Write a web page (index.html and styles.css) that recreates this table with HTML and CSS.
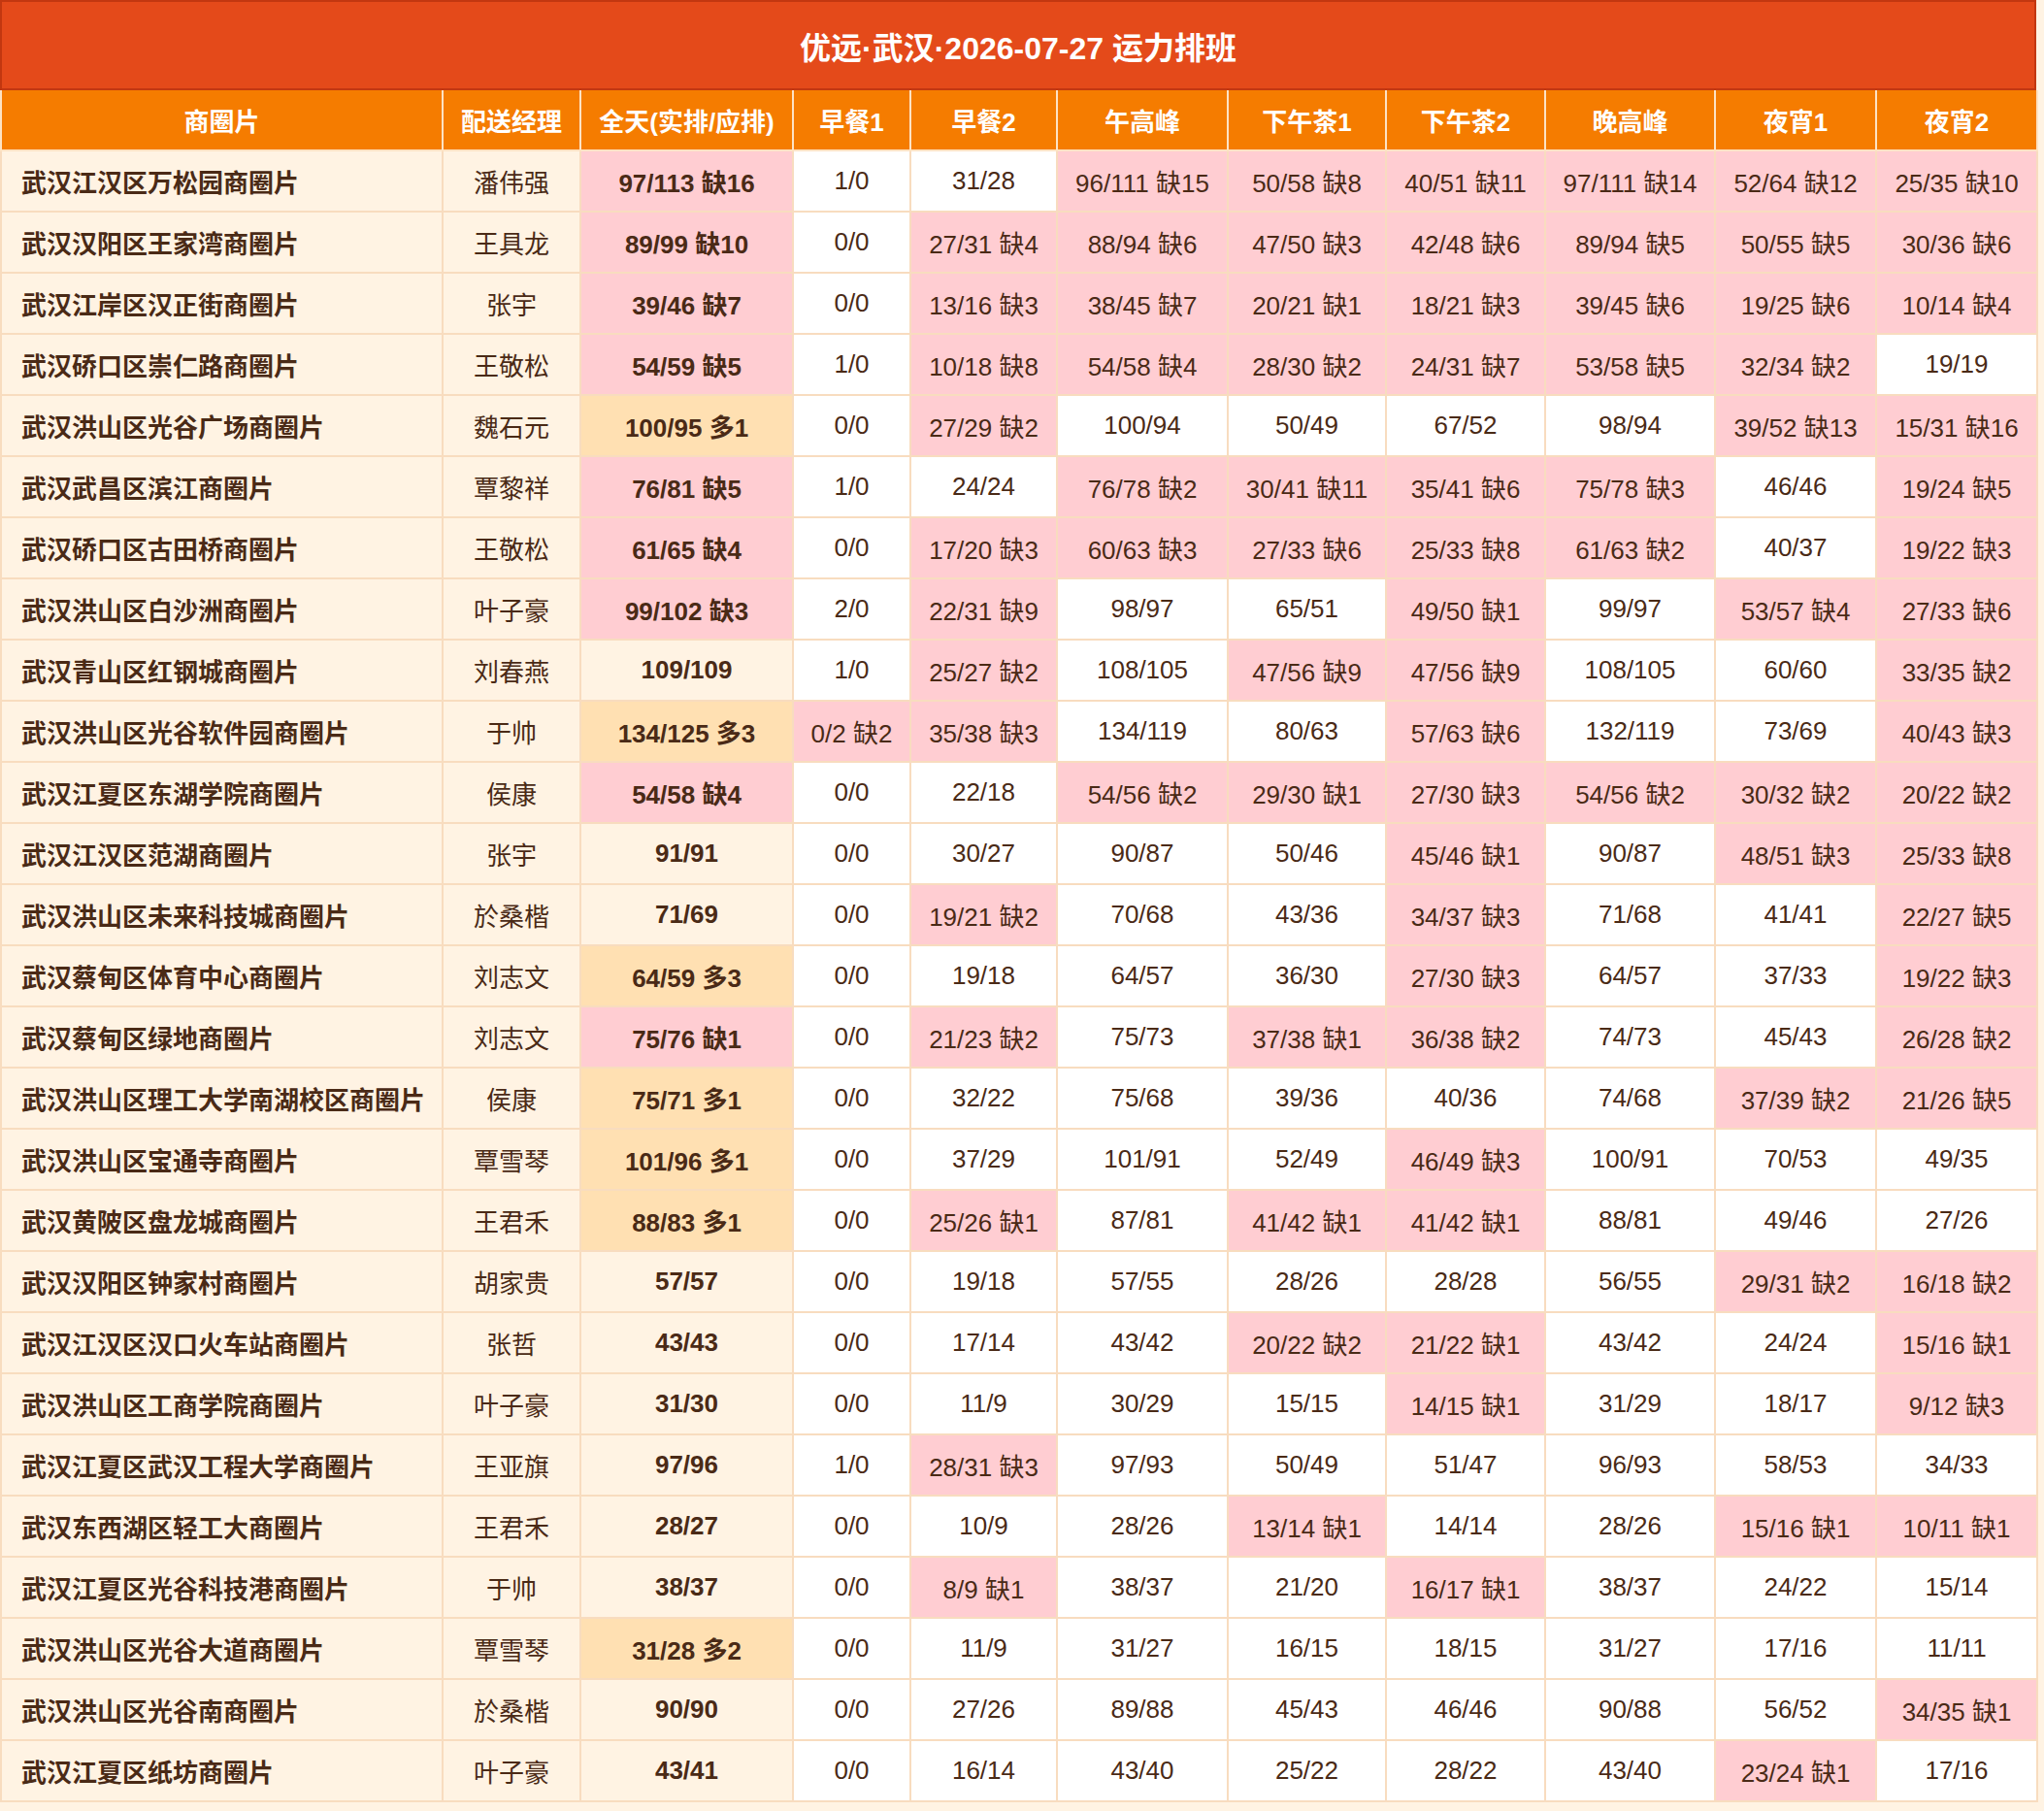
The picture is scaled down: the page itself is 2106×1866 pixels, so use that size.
FILE: index.html
```html
<!DOCTYPE html>
<html lang="zh-CN">
<head>
<meta charset="utf-8">
<title>优远·武汉·2026-07-27 运力排班</title>
<link rel="stylesheet" href="styles.css">
</head>
<body>
<div class="board">
  <div class="title">优远·武汉·2026-07-27 运力排班</div>
  <table class="grid">
    <colgroup>
      <col class="c-name"><col class="c-mgr"><col class="c-tot"><col class="c-b1"><col class="c-b2"><col class="c-lunch"><col class="c-t1"><col class="c-t2"><col class="c-dinner"><col class="c-n1"><col class="c-n2">
    </colgroup>
    <thead>
      <tr><th>商圈片</th><th>配送经理</th><th>全天(实排/应排)</th><th>早餐1</th><th>早餐2</th><th>午高峰</th><th>下午茶1</th><th>下午茶2</th><th>晚高峰</th><th>夜宵1</th><th>夜宵2</th></tr>
    </thead>
    <tbody>
      <tr><td class="name">武汉江汉区万松园商圈片</td><td class="mgr">潘伟强</td><td class="tot s">97/113 缺16</td><td>1/0</td><td>31/28</td><td class="s">96/111 缺15</td><td class="s">50/58 缺8</td><td class="s">40/51 缺11</td><td class="s">97/111 缺14</td><td class="s">52/64 缺12</td><td class="s">25/35 缺10</td></tr>
      <tr><td class="name">武汉汉阳区王家湾商圈片</td><td class="mgr">王具龙</td><td class="tot s">89/99 缺10</td><td>0/0</td><td class="s">27/31 缺4</td><td class="s">88/94 缺6</td><td class="s">47/50 缺3</td><td class="s">42/48 缺6</td><td class="s">89/94 缺5</td><td class="s">50/55 缺5</td><td class="s">30/36 缺6</td></tr>
      <tr><td class="name">武汉江岸区汉正街商圈片</td><td class="mgr">张宇</td><td class="tot s">39/46 缺7</td><td>0/0</td><td class="s">13/16 缺3</td><td class="s">38/45 缺7</td><td class="s">20/21 缺1</td><td class="s">18/21 缺3</td><td class="s">39/45 缺6</td><td class="s">19/25 缺6</td><td class="s">10/14 缺4</td></tr>
      <tr><td class="name">武汉硚口区崇仁路商圈片</td><td class="mgr">王敬松</td><td class="tot s">54/59 缺5</td><td>1/0</td><td class="s">10/18 缺8</td><td class="s">54/58 缺4</td><td class="s">28/30 缺2</td><td class="s">24/31 缺7</td><td class="s">53/58 缺5</td><td class="s">32/34 缺2</td><td>19/19</td></tr>
      <tr><td class="name">武汉洪山区光谷广场商圈片</td><td class="mgr">魏石元</td><td class="tot o">100/95 多1</td><td>0/0</td><td class="s">27/29 缺2</td><td>100/94</td><td>50/49</td><td>67/52</td><td>98/94</td><td class="s">39/52 缺13</td><td class="s">15/31 缺16</td></tr>
      <tr><td class="name">武汉武昌区滨江商圈片</td><td class="mgr">覃黎祥</td><td class="tot s">76/81 缺5</td><td>1/0</td><td>24/24</td><td class="s">76/78 缺2</td><td class="s">30/41 缺11</td><td class="s">35/41 缺6</td><td class="s">75/78 缺3</td><td>46/46</td><td class="s">19/24 缺5</td></tr>
      <tr><td class="name">武汉硚口区古田桥商圈片</td><td class="mgr">王敬松</td><td class="tot s">61/65 缺4</td><td>0/0</td><td class="s">17/20 缺3</td><td class="s">60/63 缺3</td><td class="s">27/33 缺6</td><td class="s">25/33 缺8</td><td class="s">61/63 缺2</td><td>40/37</td><td class="s">19/22 缺3</td></tr>
      <tr><td class="name">武汉洪山区白沙洲商圈片</td><td class="mgr">叶子豪</td><td class="tot s">99/102 缺3</td><td>2/0</td><td class="s">22/31 缺9</td><td>98/97</td><td>65/51</td><td class="s">49/50 缺1</td><td>99/97</td><td class="s">53/57 缺4</td><td class="s">27/33 缺6</td></tr>
      <tr><td class="name">武汉青山区红钢城商圈片</td><td class="mgr">刘春燕</td><td class="tot">109/109</td><td>1/0</td><td class="s">25/27 缺2</td><td>108/105</td><td class="s">47/56 缺9</td><td class="s">47/56 缺9</td><td>108/105</td><td>60/60</td><td class="s">33/35 缺2</td></tr>
      <tr><td class="name">武汉洪山区光谷软件园商圈片</td><td class="mgr">于帅</td><td class="tot o">134/125 多3</td><td class="s">0/2 缺2</td><td class="s">35/38 缺3</td><td>134/119</td><td>80/63</td><td class="s">57/63 缺6</td><td>132/119</td><td>73/69</td><td class="s">40/43 缺3</td></tr>
      <tr><td class="name">武汉江夏区东湖学院商圈片</td><td class="mgr">侯康</td><td class="tot s">54/58 缺4</td><td>0/0</td><td>22/18</td><td class="s">54/56 缺2</td><td class="s">29/30 缺1</td><td class="s">27/30 缺3</td><td class="s">54/56 缺2</td><td class="s">30/32 缺2</td><td class="s">20/22 缺2</td></tr>
      <tr><td class="name">武汉江汉区范湖商圈片</td><td class="mgr">张宇</td><td class="tot">91/91</td><td>0/0</td><td>30/27</td><td>90/87</td><td>50/46</td><td class="s">45/46 缺1</td><td>90/87</td><td class="s">48/51 缺3</td><td class="s">25/33 缺8</td></tr>
      <tr><td class="name">武汉洪山区未来科技城商圈片</td><td class="mgr">於桑楷</td><td class="tot">71/69</td><td>0/0</td><td class="s">19/21 缺2</td><td>70/68</td><td>43/36</td><td class="s">34/37 缺3</td><td>71/68</td><td>41/41</td><td class="s">22/27 缺5</td></tr>
      <tr><td class="name">武汉蔡甸区体育中心商圈片</td><td class="mgr">刘志文</td><td class="tot o">64/59 多3</td><td>0/0</td><td>19/18</td><td>64/57</td><td>36/30</td><td class="s">27/30 缺3</td><td>64/57</td><td>37/33</td><td class="s">19/22 缺3</td></tr>
      <tr><td class="name">武汉蔡甸区绿地商圈片</td><td class="mgr">刘志文</td><td class="tot s">75/76 缺1</td><td>0/0</td><td class="s">21/23 缺2</td><td>75/73</td><td class="s">37/38 缺1</td><td class="s">36/38 缺2</td><td>74/73</td><td>45/43</td><td class="s">26/28 缺2</td></tr>
      <tr><td class="name">武汉洪山区理工大学南湖校区商圈片</td><td class="mgr">侯康</td><td class="tot o">75/71 多1</td><td>0/0</td><td>32/22</td><td>75/68</td><td>39/36</td><td>40/36</td><td>74/68</td><td class="s">37/39 缺2</td><td class="s">21/26 缺5</td></tr>
      <tr><td class="name">武汉洪山区宝通寺商圈片</td><td class="mgr">覃雪琴</td><td class="tot o">101/96 多1</td><td>0/0</td><td>37/29</td><td>101/91</td><td>52/49</td><td class="s">46/49 缺3</td><td>100/91</td><td>70/53</td><td>49/35</td></tr>
      <tr><td class="name">武汉黄陂区盘龙城商圈片</td><td class="mgr">王君禾</td><td class="tot o">88/83 多1</td><td>0/0</td><td class="s">25/26 缺1</td><td>87/81</td><td class="s">41/42 缺1</td><td class="s">41/42 缺1</td><td>88/81</td><td>49/46</td><td>27/26</td></tr>
      <tr><td class="name">武汉汉阳区钟家村商圈片</td><td class="mgr">胡家贵</td><td class="tot">57/57</td><td>0/0</td><td>19/18</td><td>57/55</td><td>28/26</td><td>28/28</td><td>56/55</td><td class="s">29/31 缺2</td><td class="s">16/18 缺2</td></tr>
      <tr><td class="name">武汉江汉区汉口火车站商圈片</td><td class="mgr">张哲</td><td class="tot">43/43</td><td>0/0</td><td>17/14</td><td>43/42</td><td class="s">20/22 缺2</td><td class="s">21/22 缺1</td><td>43/42</td><td>24/24</td><td class="s">15/16 缺1</td></tr>
      <tr><td class="name">武汉洪山区工商学院商圈片</td><td class="mgr">叶子豪</td><td class="tot">31/30</td><td>0/0</td><td>11/9</td><td>30/29</td><td>15/15</td><td class="s">14/15 缺1</td><td>31/29</td><td>18/17</td><td class="s">9/12 缺3</td></tr>
      <tr><td class="name">武汉江夏区武汉工程大学商圈片</td><td class="mgr">王亚旗</td><td class="tot">97/96</td><td>1/0</td><td class="s">28/31 缺3</td><td>97/93</td><td>50/49</td><td>51/47</td><td>96/93</td><td>58/53</td><td>34/33</td></tr>
      <tr><td class="name">武汉东西湖区轻工大商圈片</td><td class="mgr">王君禾</td><td class="tot">28/27</td><td>0/0</td><td>10/9</td><td>28/26</td><td class="s">13/14 缺1</td><td>14/14</td><td>28/26</td><td class="s">15/16 缺1</td><td class="s">10/11 缺1</td></tr>
      <tr><td class="name">武汉江夏区光谷科技港商圈片</td><td class="mgr">于帅</td><td class="tot">38/37</td><td>0/0</td><td class="s">8/9 缺1</td><td>38/37</td><td>21/20</td><td class="s">16/17 缺1</td><td>38/37</td><td>24/22</td><td>15/14</td></tr>
      <tr><td class="name">武汉洪山区光谷大道商圈片</td><td class="mgr">覃雪琴</td><td class="tot o">31/28 多2</td><td>0/0</td><td>11/9</td><td>31/27</td><td>16/15</td><td>18/15</td><td>31/27</td><td>17/16</td><td>11/11</td></tr>
      <tr><td class="name">武汉洪山区光谷南商圈片</td><td class="mgr">於桑楷</td><td class="tot">90/90</td><td>0/0</td><td>27/26</td><td>89/88</td><td>45/43</td><td>46/46</td><td>90/88</td><td>56/52</td><td class="s">34/35 缺1</td></tr>
      <tr><td class="name">武汉江夏区纸坊商圈片</td><td class="mgr">叶子豪</td><td class="tot">43/41</td><td>0/0</td><td>16/14</td><td>43/40</td><td>25/22</td><td>28/22</td><td>43/40</td><td class="s">23/24 缺1</td><td>17/16</td></tr>
    </tbody>
  </table>
</div>
</body>
</html>
```

FILE: styles.css
```css
html, body {
  margin: 0;
  padding: 0;
}

body {
  background: #fff3e3;
  font-family: "Liberation Sans", "Noto Sans CJK SC", sans-serif;
  color: #4a2a16;
}

.board {
  width: 2098px;
}

.title {
  box-sizing: border-box;
  height: 93px;
  border: 2px solid #c23710;
  background: #e44a1a;
  color: #ffffff;
  font-size: 32px;
  font-weight: bold;
  display: flex;
  align-items: center;
  justify-content: center;
}

.grid {
  width: 2098px;
  table-layout: fixed;
  border-collapse: collapse;
}

.c-name { width: 455px; }
.c-mgr { width: 142px; }
.c-tot { width: 219px; }
.c-b1 { width: 121px; }
.c-b2 { width: 151px; }
.c-lunch { width: 176px; }
.c-t1 { width: 163px; }
.c-t2 { width: 164px; }
.c-dinner { width: 175px; }
.c-n1 { width: 166px; }
.c-n2 { width: 166px; }

.grid th {
  height: 61px;
  padding: 0;
  background: #f57c00;
  color: #ffffff;
  font-size: 26px;
  font-weight: bold;
  text-align: center;
  border: 2px solid #fde3c4;
  border-top: none;
}

.grid td {
  height: 61px;
  padding: 0;
  font-size: 26px;
  text-align: center;
  background: #ffffff;
  border: 2px solid #f8dcbf;
  white-space: nowrap;
}

.grid td.name {
  text-align: left;
  padding-left: 20px;
  font-weight: bold;
  background: #fff3e3;
}

.grid td.mgr {
  background: #fff3e3;
}

.grid td.tot {
  font-weight: bold;
  background: #fff3e3;
}

.grid td.s {
  background: #ffcdd2;
}

.grid td.tot.o {
  background: #ffe0b2;
}
```
